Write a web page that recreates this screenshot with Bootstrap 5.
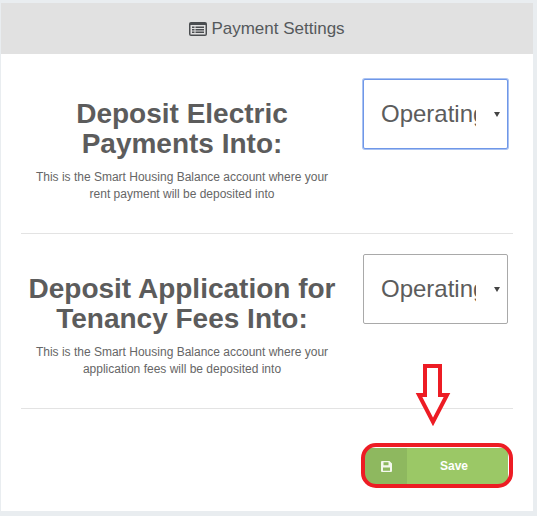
<!DOCTYPE html>
<html lang="en">
<head>
    <meta charset="UTF-8">
    <title>Payment Settings</title>
    <link href="https://cdn.jsdelivr.net/npm/bootstrap@5.3.0/dist/css/bootstrap.min.css" rel="stylesheet">
    <style>
        html, body { height: 100%; }
        body {
            background: #e9edf0;
            color: #5c5c5c;
            font-family: "Liberation Sans", Arial, sans-serif;
            margin: 0;
        }
        .page-wrap { padding: 3px 4px 5px 1px; height: 516px; }
        .settings-card {
            height: 508px;
            border: 0;
            border-radius: 0;
            background: #fff;
        }
        .settings-head {
            height: 51px;
            background: #e1e1e1;
            border: 0;
            border-radius: 0 !important;
            font-size: 17px;
            color: #55595c;
        }
        .settings-body { padding: 25px 20px 0 20px; }
        .setting-row { height: 154px; gap: 20px; }
        .setting-text { width: 322px; flex: none; padding-top: 20px; }
        .setting-title {
            font-size: 28px;
            line-height: 30px;
            font-weight: 700;
            color: #5c5c5c;
            margin-bottom: 10px;
        }
        .setting-note { font-size: 12px; line-height: 17px; color: #666; margin: 0; }
        .account-select {
            width: 145px;
            height: 70px;
            font-size: 24px;
            color: #5c5c5c;
            border: 1px solid #a9a9a9;
            border-radius: 2px;
            padding: 0 31px 0 17px;
            background-position: right 7px center;
            background-size: 6px 5px;
            background-image: url("data:image/svg+xml,%3csvg xmlns='http://www.w3.org/2000/svg' viewBox='0 0 6 5'%3e%3cpath fill='%23444' d='M0 0h6L3 5z'/%3e%3c/svg%3e");
        }
        .account-select:focus { border-color: #a9a9a9; box-shadow: none; }
        .account-select.is-focused { border-color: #6f97e8; box-shadow: 0 0 0 1px #a9c2f2; }
        .row-rule { border-top: 1px solid #e3e3e3; margin: 0; opacity: 1; }
        .rule-gap { height: 20px; }
        .save-row { padding: 39px 5px 0 0; }
        .save-btn {
            width: 143px;
            height: 36px;
            padding: 0;
            border: 0;
            border-radius: 3px;
            background: #9bc866;
            color: #fff;
            font-size: 12px;
            font-weight: 700;
            overflow: hidden;
        }
        .save-icon { width: 42px; background: #8eb85f; }
        .save-label { padding-right: 7px; }
        .mark-over { position: absolute; left: 0; top: 0; pointer-events: none; }
    </style>
</head>
<body>
    <div class="page-wrap position-relative">
        <div class="card settings-card">
            <div class="card-header settings-head d-flex align-items-center justify-content-center gap-1">
                <svg width="18" height="14" viewBox="0 0 18 14">
                    <rect x="0" y="0" width="18" height="14" rx="2" fill="#4a4d50"/>
                    <rect x="1.5" y="3" width="15" height="9.500" fill="#e1e1e1"/>
                    <path d="M3 4.500h2.500v1.400H3zM3 7h2.500v1.400H3zM3 9.500h2.500v1.400H3zM6.500 4.500H15v1.400H6.500zM6.500 7H15v1.400H6.500zM6.500 9.500H15v1.400H6.500z" fill="#4a4d50"/>
                </svg>
                <span>Payment Settings</span>
            </div>
            <div class="settings-body">
                <div class="setting-row d-flex">
                    <div class="setting-text text-center">
                        <div class="setting-title">Deposit Electric<br>Payments Into:</div>
                        <p class="setting-note">This is the Smart Housing Balance account where your<br>rent payment will be deposited into</p>
                    </div>
                    <select class="form-select account-select is-focused">
                        <option>Operating Account</option>
                    </select>
                </div>
                <hr class="row-rule">
                <div class="rule-gap"></div>
                <div class="setting-row d-flex">
                    <div class="setting-text text-center">
                        <div class="setting-title">Deposit Application for<br>Tenancy Fees Into:</div>
                        <p class="setting-note">This is the Smart Housing Balance account where your<br>application fees will be deposited into</p>
                    </div>
                    <select class="form-select account-select">
                        <option>Operating Account</option>
                    </select>
                </div>
                <hr class="row-rule">
                <div class="save-row d-flex justify-content-end">
                    <button type="button" class="btn save-btn d-flex align-items-stretch">
                        <span class="save-icon d-flex align-items-center justify-content-center">
                            <svg width="11" height="11" viewBox="0 0 11 11">
                                <path fill="#f4f8ee" fill-rule="evenodd" d="M1 0h7.500L11 2.500V10a1 1 0 0 1-1 1H1a1 1 0 0 1-1-1V1a1 1 0 0 1 1-1zM2.500 1.200v3h5v-3zM2 6.500v3.300h7V6.500z"/>
                            </svg>
                        </span>
                        <span class="save-label flex-grow-1 align-self-center">Save</span>
                    </button>
                </div>
            </div>
        </div>
        <!-- red annotation drawn over the screenshot -->
        <svg class="mark-over" width="537" height="516" viewBox="0 0 537 516" fill="none" stroke="#ed1c24" stroke-width="4">
            <path d="M425 366h15v29h7L433 422 419 395h6z" fill="#fff"/>
            <rect x="363" y="445" width="148" height="41" rx="13"/>
        </svg>
    </div>
    <script src="https://cdn.jsdelivr.net/npm/bootstrap@5.3.0/dist/js/bootstrap.bundle.min.js"></script>
</body>
</html>
